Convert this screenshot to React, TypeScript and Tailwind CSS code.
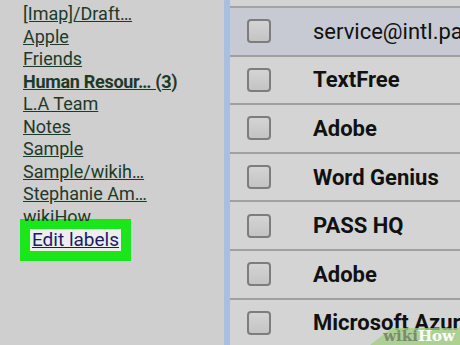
import React from "react";

const labels: { name: string; bold?: boolean }[] = [
  { name: "[Imap]/Draft…" },
  { name: "Apple" },
  { name: "Friends" },
  { name: "Human Resour… (3)", bold: true },
  { name: "L.A Team" },
  { name: "Notes" },
  { name: "Sample" },
  { name: "Sample/wikih…" },
  { name: "Stephanie Am…" },
];

const senders = [
  { name: "service@intl.paypal.com", selected: true },
  { name: "TextFree" },
  { name: "Adobe" },
  { name: "Word Genius" },
  { name: "PASS HQ" },
  { name: "Adobe" },
  { name: "Microsoft Azure" },
];

const Checkbox = () => (
  <div className="w-[24px] h-[24px] shrink-0 rounded-[4px] border-2 border-[#7d7d7d] bg-gradient-to-b from-[#d4d4d4] to-[#c4c4c4]" />
);

export default function App() {
  return (
    <div
      className="relative w-[460px] h-[345px] overflow-hidden flex bg-[#cfcfcf]"
      style={{ fontFamily: "Roboto, 'Noto Sans', sans-serif" }}
    >
      {/* label sidebar */}
      <div className="w-[224px] shrink-0 pl-[23px] pt-[3px] text-[18px] leading-[22.5px] text-[#1d3a29]">
        {labels.map((l) => (
          <div key={l.name} className="whitespace-nowrap">
            <span className={l.bold ? "underline font-bold tracking-[-0.3px]" : "underline"}>{l.name}</span>
          </div>
        ))}
        <div className="whitespace-nowrap h-[15px] overflow-hidden">wikiHow</div>
        <div className="ml-[-3px] mt-[-2px] w-[111px] h-[42px] bg-[#1ae61a] flex items-center pl-[10px]">
          <span className="bg-[#eeeeee] px-[2px] text-[19px] leading-[22px] underline text-[#1b1a6b]">Edit labels</span>
        </div>
      </div>

      <div className="w-[6px] shrink-0 bg-[#aabfdf]" />

      {/* message list */}
      <div className="flex-1 flex flex-col bg-[#d3d3d3]">
        <div className="h-[6px] shrink-0 border-b-2 border-[#a3a3a3] box-content" />
        {senders.map((s, i) => (
          <div
            key={i}
            className={`h-[46.6px] shrink-0 box-content border-b-2 border-[#a0a0a0] flex items-center pl-[17px] ${
              s.selected ? "bg-[#c7c9d3]" : "bg-[#d4d4d4]"
            }`}
          >
            <Checkbox />
            <span
              className={`ml-[42px] whitespace-nowrap text-[22px] text-[#111] ${
                s.selected ? "font-normal" : "font-bold"
              }`}
            >
              {s.name}
            </span>
          </div>
        ))}
      </div>

      {/* watermark */}
      <div className="absolute right-0 bottom-0 w-[90px] h-[20px]">
        <svg width="90" height="20" className="absolute inset-0">
          <polygon points="0,20 22,3 90,3 90,20" fill="#a3cf84" opacity="0.8" />
        </svg>
        <div
          className="absolute right-[5px] bottom-[0px] text-[15px] font-bold leading-[18px]"
          style={{ fontFamily: "'DejaVu Serif', serif" }}
        >
          <span className="text-[#7b8a6c]">wiki</span>
          <span className="text-white">How</span>
        </div>
      </div>
    </div>
  );
}
